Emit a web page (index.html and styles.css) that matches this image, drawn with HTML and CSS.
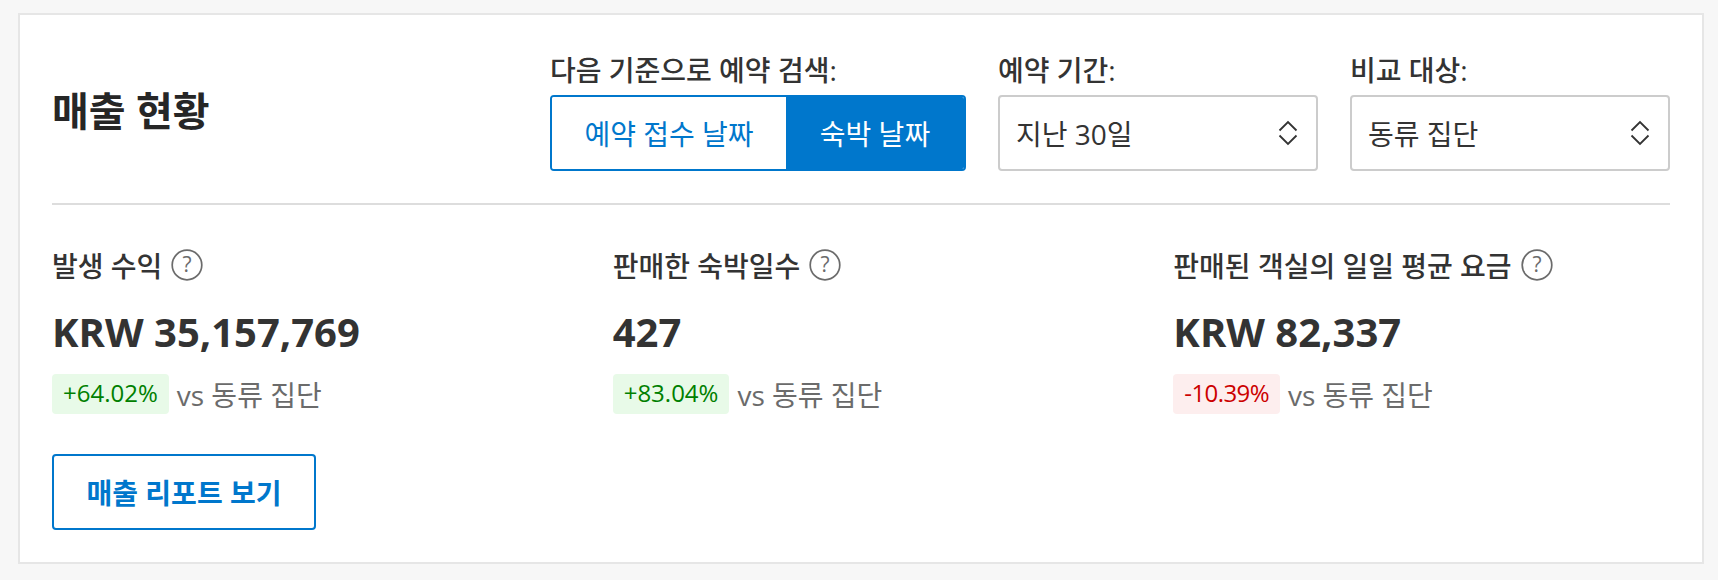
FILE: index.html
```html
<!DOCTYPE html>
<html lang="ko">
<head>
<meta charset="utf-8">
<title>매출 현황</title>
<link rel="stylesheet" href="styles.css">
</head>
<body>
<section class="card">
  <header class="head">
    <h2 class="title">매출 현황</h2>
    <div class="filters">
      <div class="field">
        <span class="label">다음 기준으로 예약 검색:</span>
        <div class="toggle">
          <button class="seg seg-off">예약 접수 날짜</button>
          <button class="seg seg-on">숙박 날짜</button>
        </div>
      </div>
      <div class="field">
        <span class="label">예약 기간:</span>
        <div class="select">지난 30일
          <svg class="chev" viewBox="0 0 20 28" width="20" height="28"><path d="M1.5 11.5l8.5-8.5 8.5 8.5M1.5 16.5l8.5 8.5 8.5-8.5" fill="none" stroke="#333" stroke-width="1.8"/></svg>
        </div>
      </div>
      <div class="field">
        <span class="label">비교 대상:</span>
        <div class="select">동류 집단
          <svg class="chev" viewBox="0 0 20 28" width="20" height="28"><path d="M1.5 11.5l8.5-8.5 8.5 8.5M1.5 16.5l8.5 8.5 8.5-8.5" fill="none" stroke="#333" stroke-width="1.8"/></svg>
        </div>
      </div>
    </div>
  </header>
  <div class="metrics">
    <div class="metric">
      <div class="m-label">발생 수익 <svg class="help" viewBox="0 0 32 32" width="32" height="32"><circle cx="16" cy="16" r="14.8" fill="none" stroke="#6b6b6b" stroke-width="1.7"/><text x="16" y="23" text-anchor="middle" class="q">?</text></svg></div>
      <div class="value">KRW 35,157,769</div>
      <div class="cmp"><span class="chip up">+64.02%</span> <span class="vs">vs 동류 집단</span></div>
    </div>
    <div class="metric">
      <div class="m-label">판매한 숙박일수 <svg class="help" viewBox="0 0 32 32" width="32" height="32"><circle cx="16" cy="16" r="14.8" fill="none" stroke="#6b6b6b" stroke-width="1.7"/><text x="16" y="23" text-anchor="middle" class="q">?</text></svg></div>
      <div class="value">427</div>
      <div class="cmp"><span class="chip up">+83.04%</span> <span class="vs">vs 동류 집단</span></div>
    </div>
    <div class="metric">
      <div class="m-label">판매된 객실의 일일 평균 요금 <svg class="help" viewBox="0 0 32 32" width="32" height="32"><circle cx="16" cy="16" r="14.8" fill="none" stroke="#6b6b6b" stroke-width="1.7"/><text x="16" y="23" text-anchor="middle" class="q">?</text></svg></div>
      <div class="value">KRW 82,337</div>
      <div class="cmp"><span class="chip down">-10.39%</span> <span class="vs">vs 동류 집단</span></div>
    </div>
  </div>
  <button class="report">매출 리포트 보기</button>
</section>
</body>
</html>
```
FILE: styles.css
```css
* { box-sizing: border-box; }
html, body { height: 100%; }
body {
  margin: 0;
  padding: 13px 14px 16px 18px;
  background: #f7f7f7;
  color: #333;
  font-family: "Open Sans", "Noto Sans CJK KR", sans-serif;
  font-size: 28px;
}
.card {
  background: #fff;
  border: 2px solid #e6e6e6;
  height: 551px;
  padding: 0 32px;
}
.head {
  display: flex;
  justify-content: space-between;
  align-items: center;
  height: 190px;
  border-bottom: 2px solid #ddd;
}
.title { margin: 0; font-size: 40px; font-weight: 700; color: #262626; }
.filters { display: flex; gap: 32px; padding-top: 6px; }
.field { display: flex; flex-direction: column; gap: 8px; }
.label { font-size: 28px; line-height: 34px; font-weight: 500; }
.toggle { display: flex; width: 416px; height: 76px; border: 2px solid #0077cc; border-radius: 4px; overflow: hidden; }
.seg { border: 0; font: inherit; padding: 0; }
.seg-off { flex: 0 0 234px; background: #fff; color: #0077cc; }
.seg-on { flex: 1; background: #0077cc; color: #fff; }
.select {
  display: flex; justify-content: space-between; align-items: center;
  width: 320px; height: 76px; padding: 0 18px 0 16px;
  border: 2px solid #ccc; border-radius: 4px;
}
.metrics { display: grid; grid-template-columns: repeat(3, 1fr); column-gap: 64px; padding-top: 40px; }
.m-label { display: flex; align-items: center; gap: 9px; height: 40px; font-size: 28px; font-weight: 500; }
.value { font-size: 40px; font-weight: 700; margin-top: 23px; line-height: 48px; }
.cmp { display: flex; align-items: center; gap: 8px; margin-top: 18px; }
.chip { padding: 0 11px; height: 40px; line-height: 38px; border-radius: 4px; font-size: 24px; }
.up { background: #e8fae8; color: #008000; }
.down { background: #fdeeee; color: #cc0000; letter-spacing: -0.6px; }
.vs { color: #6b6b6b; }
.q { font-size: 21px; fill: #6b6b6b; }
.report {
  display: block; margin-top: 40px; width: 264px; height: 76px;
  background: #fff; border: 2px solid #0077cc; border-radius: 4px;
  color: #0077cc; font: 600 28px "Open Sans", "Noto Sans CJK KR", sans-serif;
}
```
